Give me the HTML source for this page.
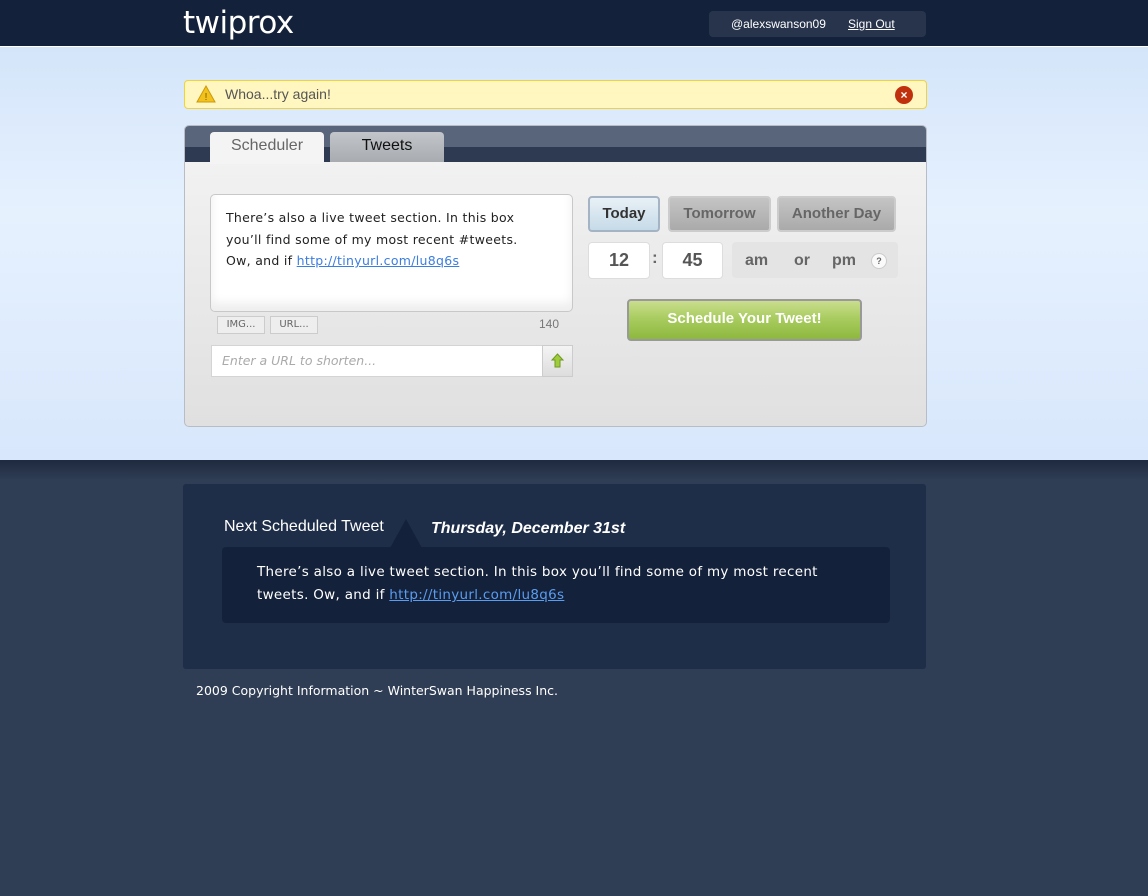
<!DOCTYPE html>
<html><head><meta charset="utf-8"><style>
*{margin:0;padding:0;box-sizing:border-box}
body{width:1148px;height:896px;background:#2f3d55;font-family:"DejaVu Sans","Liberation Sans",sans-serif;position:relative;overflow:hidden}
.abs{position:absolute}
#hdr{left:0;top:0;width:1148px;height:46px;background:#13213a}
#sky{left:0;top:46px;width:1148px;height:414px;background:linear-gradient(#d4e5fa,#e6f1fe 40%,#d8e7fc);border-top:1px solid #fff}
#shadow{left:0;top:460px;width:1148px;height:20px;background:linear-gradient(#1e2a3e,#2f3d55)}
.btn{position:absolute;border-radius:4px;font-family:"Liberation Sans",sans-serif;font-weight:bold;text-align:center}
</style></head><body>
<div id="hdr" class="abs"></div>
<div class="abs" style="left:183px;top:3px;color:#fff;font-family:'DejaVu Sans',sans-serif;font-size:31px;letter-spacing:-0.5px;line-height:40px">twiprox</div>
<div class="abs" style="left:709px;top:11px;width:217px;height:26px;background:#27344c;border-radius:4px;color:#fff;font-family:'Liberation Sans',sans-serif;font-size:12px;line-height:26px"><span style="position:absolute;left:22px">@alexswanson09</span><span style="position:absolute;left:139px;text-decoration:underline">Sign Out</span></div>
<div id="sky" class="abs"></div>
<div id="shadow" class="abs"></div>

<div class="abs" style="left:184px;top:80px;width:743px;height:29px;background:#fff6c0;border:1px solid #f2d23c;border-radius:4px">
 <svg class="abs" style="left:11px;top:4px" width="20" height="18"><polygon points="10,1 19,17 1,17" fill="#f3c11c" stroke="#c99a0c"/><text x="10" y="15" font-size="10" text-anchor="middle" fill="#7a5a00" font-family="Liberation Sans">!</text></svg>
 <span class="abs" style="left:40px;top:5px;font-family:'Liberation Sans',sans-serif;font-size:14px;color:#555">Whoa...try again!</span>
 <div class="abs" style="left:710px;top:5px;width:18px;height:18px;border-radius:50%;background:#c0300c;color:#fff;font-size:12px;font-weight:bold;text-align:center;line-height:18px;font-family:'Liberation Sans'">×</div>
</div>

<div class="abs" style="left:184px;top:125px;width:743px;height:302px;border:1px solid #b8bcc4;border-radius:5px;background:linear-gradient(#f4f4f4,#e0e0e0);overflow:hidden">
 <div class="abs" style="left:0;top:0;width:743px;height:36px;background:linear-gradient(#58657a 0,#58657a 21px,#2d3a52 21px)"></div>
 <div class="abs" style="left:25px;top:6px;width:114px;height:32px;background:#f4f4f4;border-radius:4px 4px 0 0;font-family:'Liberation Sans';font-size:16px;color:#666;text-align:center;line-height:28px">Scheduler</div>
 <div class="abs" style="left:145px;top:6px;width:114px;height:30px;background:linear-gradient(#c2c5c9,#a8abb0);border-radius:4px 4px 0 0;font-family:'Liberation Sans';font-size:16px;color:#111;text-align:center;line-height:28px">Tweets</div>

 <div class="abs" style="left:25px;top:68px;width:363px;height:118px;background:#fff;border:1px solid #c8c8c8;border-radius:5px;box-shadow:inset 0 -8px 10px #eee;padding:12px 40px 12px 15px;font-size:12.5px;line-height:21.5px;color:#222;letter-spacing:0.3px">There’s also a live tweet section. In this box you’ll find some of my most recent #tweets. Ow, and if <span style="color:#3b7de0;text-decoration:underline">http://tinyurl.com/lu8q6s</span></div>
 <div class="abs" style="left:32px;top:190px;width:48px;height:18px;border:1px solid #ccc;background:#eee;font-size:10px;color:#666;text-align:center;line-height:16px">IMG...</div>
 <div class="abs" style="left:85px;top:190px;width:48px;height:18px;border:1px solid #ccc;background:#eee;font-size:10px;color:#666;text-align:center;line-height:16px">URL...</div>
 <div class="abs" style="left:354px;top:191px;font-family:'Liberation Sans';font-size:12px;color:#777">140</div>
 <div class="abs" style="left:26px;top:219px;width:362px;height:32px;background:#fff;border:1px solid #d4d4d4;font-size:12.5px;font-style:italic;color:#aaa;line-height:30px;padding-left:10px">Enter a URL to shorten...</div>
 <div class="abs" style="left:357px;top:219px;width:31px;height:32px;background:linear-gradient(#f4f4f4,#ddd);border:1px solid #ccc"><svg width="29" height="30"><path d="M14.5 8 L20 14 L17 14 L17 21 L12 21 L12 14 L9 14 Z" fill="#9fcc3a" stroke="#6f9a20"/></svg></div>

 <div class="btn" style="left:403px;top:70px;width:72px;height:36px;background:linear-gradient(#e8f0f6,#c6dbe8);border:2px solid #a4b4c4;color:#333;font-size:15px;line-height:32px">Today</div>
 <div class="btn" style="left:483px;top:70px;width:103px;height:36px;background:linear-gradient(#c4c4c4,#aaa);border:2px solid #ccc;color:#666;font-size:15px;line-height:32px">Tomorrow</div>
 <div class="btn" style="left:592px;top:70px;width:119px;height:36px;background:linear-gradient(#c4c4c4,#aaa);border:2px solid #ccc;color:#666;font-size:15px;line-height:32px">Another Day</div>
 <div class="btn" style="left:403px;top:116px;width:62px;height:37px;background:#fff;border:1px solid #ddd;color:#555;font-size:18px;line-height:35px">12</div>
 <div class="abs" style="left:467px;top:122px;font-family:'Liberation Sans';font-weight:bold;font-size:17px;color:#666">:</div>
 <div class="btn" style="left:477px;top:116px;width:61px;height:37px;background:#fff;border:1px solid #ddd;color:#555;font-size:18px;line-height:35px">45</div>
 <div class="btn" style="left:547px;top:116px;width:166px;height:36px;background:#e4e4e4;color:#666;font-size:16px;line-height:38px"><span class="abs" style="left:13px">am</span><span class="abs" style="left:62px">or</span><span class="abs" style="left:100px">pm</span><span class="abs" style="left:139px;top:11px;width:16px;height:16px;border-radius:50%;background:#fafafa;border:1px solid #ccc;font-size:9px;line-height:14px">?</span></div>
 <div class="btn" style="left:442px;top:173px;width:235px;height:42px;background:linear-gradient(#cade8e,#a9cc60 45%,#8db83e);border:2px solid #999;color:#fff;font-size:15px;line-height:36px">Schedule Your Tweet!</div>
</div>

<div class="abs" style="left:183px;top:484px;width:743px;height:185px;background:#1f2e48;border-radius:3px"></div>
<div class="abs" style="left:224px;top:518px;font-family:'Liberation Sans';font-size:16px;color:#fff">Next Scheduled Tweet</div>
<div class="abs" style="left:431px;top:520px;font-family:'Liberation Sans';font-size:16px;font-style:italic;font-weight:bold;color:#fff">Thursday, December 31st</div>
<svg class="abs" style="left:388px;top:519px" width="36" height="30"><polygon points="18,0 34,29 2,29" fill="#14213a"/></svg>
<div class="abs" style="left:222px;top:547px;width:668px;height:76px;background:#14213a;border-radius:4px;padding:14px 70px 14px 35px;color:#fff;font-size:13.5px;line-height:23px;letter-spacing:0.3px">There’s also a live tweet section. In this box you’ll find some of my most recent tweets. Ow, and if <span style="color:#5a9cf0;text-decoration:underline">http://tinyurl.com/lu8q6s</span></div>
<div class="abs" style="left:196px;top:683px;color:#fff;font-size:12.5px">2009 Copyright Information ~ WinterSwan Happiness Inc.</div>
</body></html>
